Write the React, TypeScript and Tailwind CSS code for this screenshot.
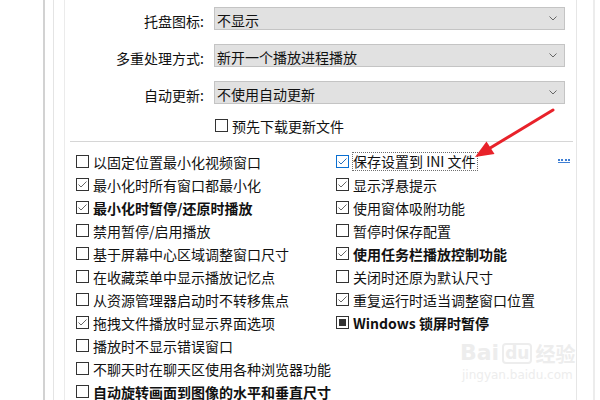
import type { ReactNode } from "react";

type CheckState = "off" | "on" | "mixed";

interface Item {
  label: string;
  state: CheckState;
  bold?: boolean;
}

const LEFT: Item[] = [
  { label: "以固定位置最小化视频窗口", state: "off" },
  { label: "最小化时所有窗口都最小化", state: "on" },
  { label: "最小化时暂停/还原时播放", state: "on", bold: true },
  { label: "禁用暂停/启用播放", state: "off" },
  { label: "基于屏幕中心区域调整窗口尺寸", state: "off" },
  { label: "在收藏菜单中显示播放记忆点", state: "off" },
  { label: "从资源管理器启动时不转移焦点", state: "off" },
  { label: "拖拽文件播放时显示界面选项", state: "on" },
  { label: "播放时不显示错误窗口", state: "off" },
  { label: "不聊天时在聊天区使用各种浏览器功能", state: "off" },
  { label: "自动旋转画面到图像的水平和垂直尺寸", state: "off", bold: true },
];

const RIGHT: Item[] = [
  { label: "显示浮悬提示", state: "on" },
  { label: "使用窗体吸附功能", state: "on" },
  { label: "暂停时保存配置", state: "off" },
  { label: "使用任务栏播放控制功能", state: "on", bold: true },
  { label: "关闭时还原为默认尺寸", state: "off" },
  { label: "重复运行时适当调整窗口位置", state: "on" },
  { label: "Windows 锁屏时暂停", state: "mixed", bold: true },
];

function Box({ state, focused }: { state: CheckState; focused?: boolean }) {
  return (
    <span
      className={
        "w-[13px] h-[13px] shrink-0 bg-white border flex items-center justify-center " +
        (focused ? "border-[#0a6fd1]" : "border-[#333333]")
      }
    >
      {state === "on" && (
        <svg width="11" height="11" viewBox="0 0 11 11">
          <polyline
            points="1.5,5.5 4,8 9.5,2.5"
            fill="none"
            stroke={focused ? "#2a6fb8" : "#666666"}
            strokeWidth="1"
          />
        </svg>
      )}
      {state === "mixed" && <span className="w-[7px] h-[7px] bg-[#333333]" />}
    </span>
  );
}

function Row({ item }: { item: Item }) {
  return (
    <div className="h-[23px] flex items-center gap-[4px]">
      <Box state={item.state} />
      <span className={"leading-[18px] whitespace-nowrap " + (item.bold ? "font-bold" : "")}>{item.label}</span>
    </div>
  );
}

function Select({ label, value }: { label: string; value: string }) {
  return (
    <div className="h-[23px] flex items-center">
      <div className="w-[139px] text-right leading-[18px] pt-[4px]">{label}</div>
      <div className="ml-[10px] w-[351px] h-[23px] bg-[#e1e1e1] border border-[#c4c4c4] flex items-center pl-[2px] pr-[7px]">
        <span className="flex-1 leading-[18px] pt-[2px]">{value}</span>
        <svg width="8" height="5" viewBox="0 0 8 5">
          <polyline points="0.5,0.5 4,4 7.5,0.5" fill="none" stroke="#666" strokeWidth="1" />
        </svg>
      </div>
    </div>
  );
}

function Rule({ className }: { className: string }): ReactNode {
  return <div className={"shrink-0 h-full " + className} />;
}

export default function App() {
  return (
    <div className="relative w-[600px] h-[400px] overflow-hidden bg-white flex text-[14px] text-[#111111] font-['Microsoft_YaHei','Noto_Sans_CJK_SC',sans-serif]">
      <Rule className="w-[43px]" />
      <Rule className="w-[10px] border-l-2 border-[#d2d2d2]" />
      <Rule className="w-[11px] border-l border-[#e4e4e4]" />
      <div className="w-[512px] shrink-0 h-full border-l border-[#ebebeb] pt-[7px]">
        <div className="flex flex-col gap-[14px]">
          <Select label="托盘图标:" value="不显示" />
          <Select label="多重处理方式:" value="新开一个播放进程播放" />
          <Select label="自动更新:" value="不使用自动更新" />
        </div>
        <div className="mt-[10px] pl-[150px]">
          <Row item={{ label: "预先下载更新文件", state: "off" }} />
        </div>
        <div className="mt-[4px] ml-[5px] mr-[3px] h-px bg-[#d6d6d6]" />
        <div className="pt-[8px] pl-[11px] flex">
          <div className="w-[260px] shrink-0 flex flex-col">
            {LEFT.map((it) => (
              <Row key={it.label} item={it} />
            ))}
          </div>
          <div className="flex-1 flex flex-col pr-[6px]">
            <div className="h-[23px] flex items-center">
              <Box state="on" focused />
              <span className="ml-[3px] border border-dotted border-[#6f6f6f] leading-[17px] pr-[1px] whitespace-nowrap">
                保存设置到 INI 文件
              </span>
              <span className="ml-auto w-[12px] flex flex-col gap-[1px] -mt-[1px]">
                <span className="h-px border-t-2 border-dotted border-[#3f7fd4]" />
                <span className="h-px bg-[#3f7fd4]" />
              </span>
            </div>
            {RIGHT.map((it) => (
              <Row key={it.label} item={it} />
            ))}
          </div>
        </div>
      </div>
      <Rule className="w-[17px] border-l border-[#e6e6e6]" />
      <Rule className="flex-1 border-l-2 border-[#ececec]" />

      <div className="absolute left-[460px] top-[342px] text-[#ededed] font-['DejaVu_Sans',sans-serif] leading-none select-none">
        <div className="flex items-end gap-[3px]">
          <span className="text-[22px] font-bold">Bai</span>
          <span className="text-[17px] font-bold border-2 border-[#ededed] rounded-[4px] px-[1px]">du</span>
          <span className="text-[20px] font-['Noto_Sans_CJK_SC'] font-bold">经验</span>
        </div>
        <div className="text-[12px] mt-[5px] ml-[2px]">jingyan.baidu.com</div>
      </div>

      <svg className="absolute left-0 top-0" width="600" height="400" viewBox="0 0 600 400">
        <line x1="553" y1="110" x2="486" y2="150.5" stroke="#e8222a" strokeWidth="3" strokeLinecap="round" />
        <polygon points="475,157 486.5,141.5 494.5,154" fill="#e8222a" />
      </svg>
    </div>
  );
}
